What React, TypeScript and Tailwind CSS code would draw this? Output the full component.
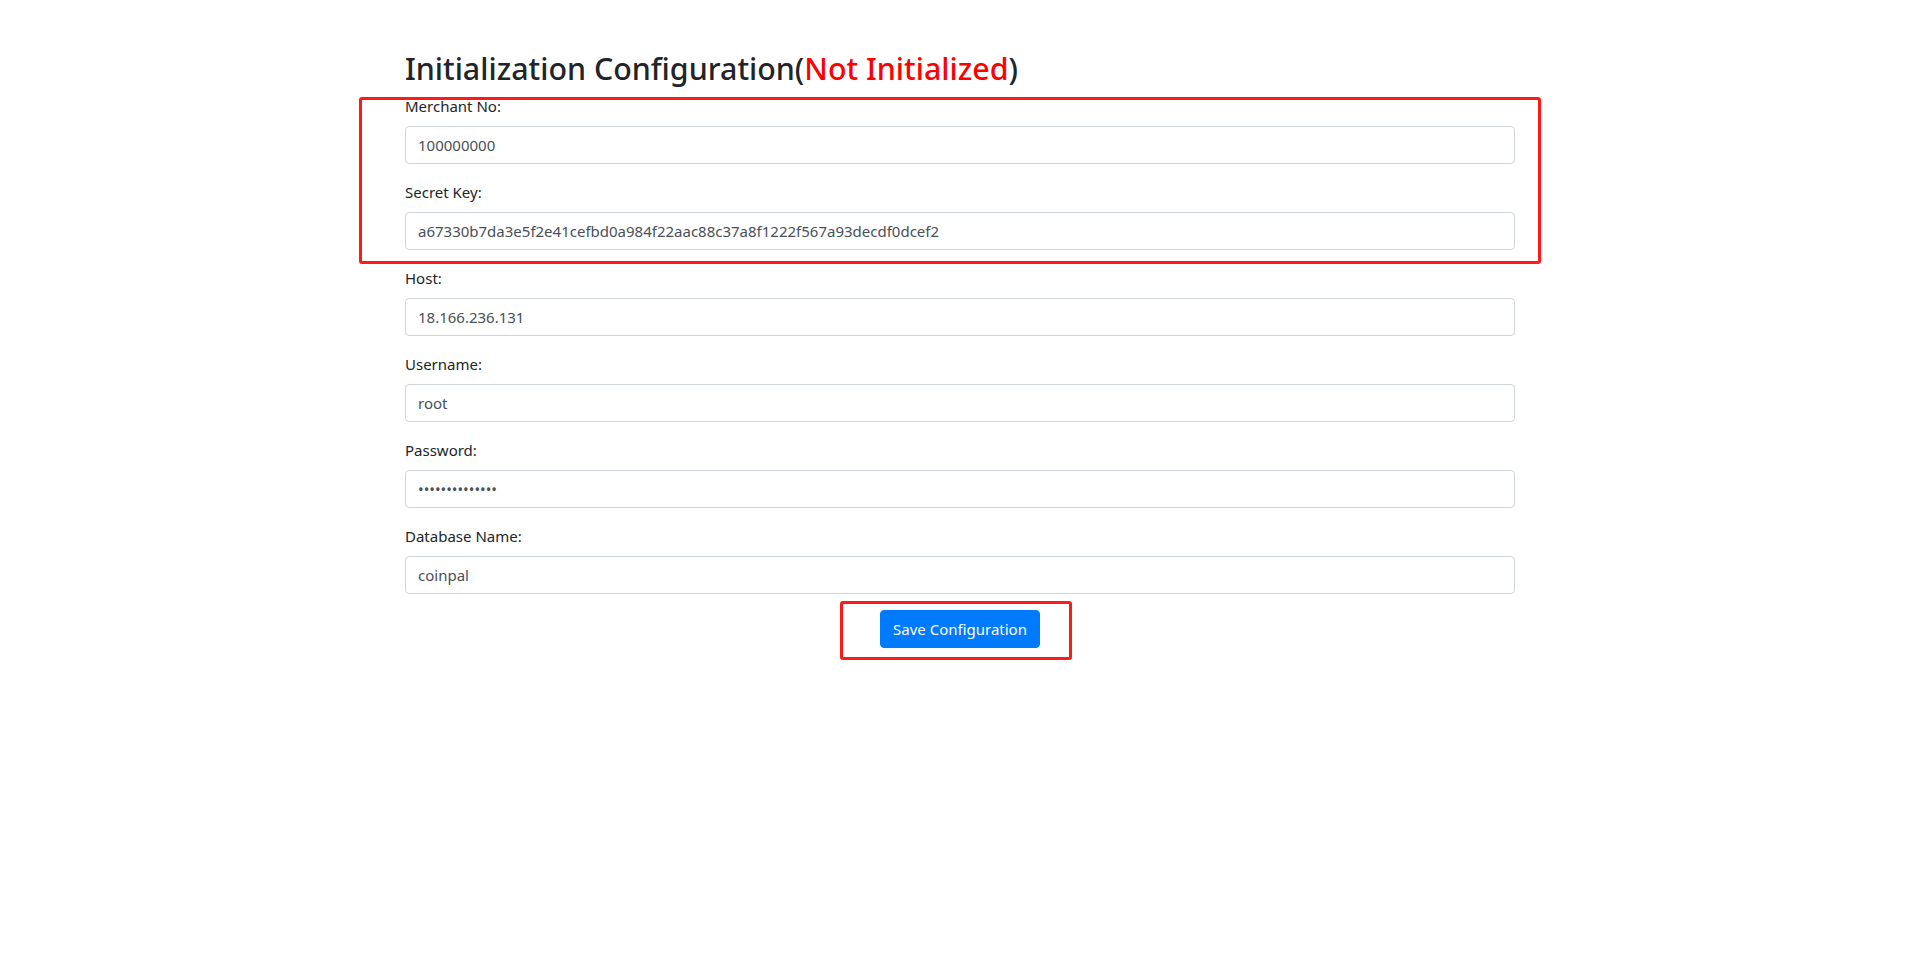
const fields = [
  { label: 'Merchant No:', value: '100000000', type: 'text' },
  { label: 'Secret Key:', value: 'a67330b7da3e5f2e41cefbd0a984f22aac88c37a8f1222f567a93decdf0dcef2', type: 'text' },
  { label: 'Host:', value: '18.166.236.131', type: 'text' },
  { label: 'Username:', value: 'root', type: 'text' },
  { label: 'Password:', value: 'password123456', type: 'password' },
  { label: 'Database Name:', value: 'coinpal', type: 'text' },
]

export default function App() {
  return (
    <div className="relative min-h-screen w-full bg-white text-[#212529] font-['Segoe_UI','Noto_Sans','Liberation_Sans',sans-serif]">
      <div className="mx-auto w-[1140px] px-[15px] pt-[50px]">
        <h2 className="mb-[6px] text-[30.4px] font-medium leading-[38.4px]">
          Initialization Configuration(<span className="text-[#ff0000]">Not Initialized</span>)
        </h2>

        <form onSubmit={(e) => e.preventDefault()}>
          {fields.map((f) => (
            <div key={f.label} className="mb-4">
              <label className="mb-2 inline-block text-[15px] leading-6">{f.label}</label>
              <input
                type={f.type}
                defaultValue={f.value}
                className="block h-[38px] w-full rounded-[4px] border border-[#ced4da] bg-white px-3 py-1.5 text-[15px] leading-6 text-[#495057] outline-none"
              />
            </div>
          ))}
          <div className="text-center">
            <button
              type="submit"
              className="inline-block h-[38px] rounded-[4px] border border-[#007bff] bg-[#007bff] px-3 text-[15px] leading-6 text-white"
            >
              Save Configuration
            </button>
          </div>
        </form>
      </div>

      {/* annotation boxes drawn over the form */}
      <div className="pointer-events-none absolute left-[359px] top-[97px] h-[167px] w-[1182px] rounded-[3px] border-[3px] border-[#ff1a1a]" />
      <div className="pointer-events-none absolute left-[840px] top-[601px] h-[59px] w-[232px] rounded-[3px] border-[3px] border-[#ff1a1a]" />
    </div>
  )
}
